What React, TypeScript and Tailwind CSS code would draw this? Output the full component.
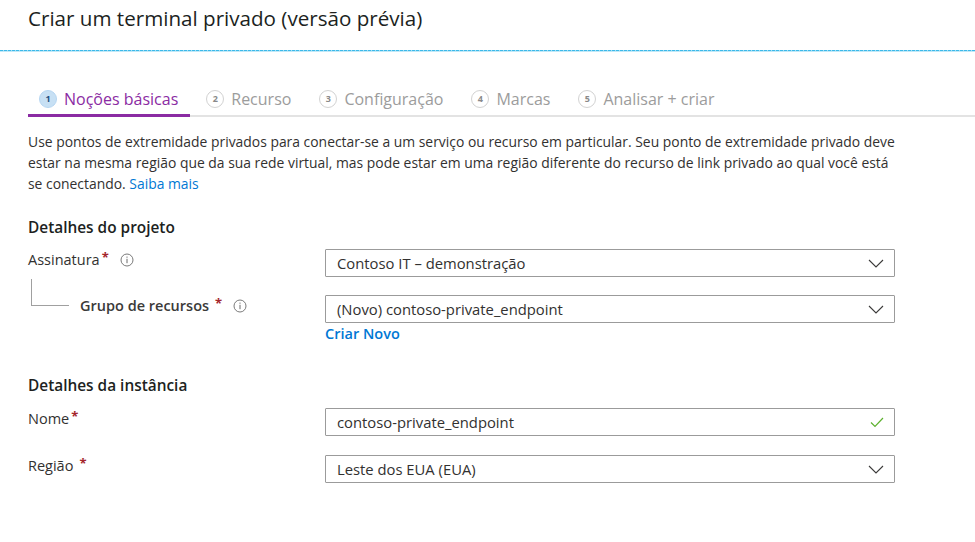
import React from "react";

const Chevron = () => (
  <svg width="16" height="9" viewBox="0 0 16 9" className="shrink-0">
    <path d="M1 1l7 7 7-7" stroke="#3b3a39" strokeWidth="1.1" fill="none" />
  </svg>
);

const Check = () => (
  <svg width="14" height="11" viewBox="0 0 14 11" className="shrink-0">
    <path d="M1 5.5l4 4 8-8.5" stroke="#5db12f" strokeWidth="1.2" fill="none" />
  </svg>
);

const Info = () => (
  <svg width="14" height="14" viewBox="0 0 14 14" className="shrink-0">
    <circle cx="7" cy="7" r="6" stroke="#6b6b6b" strokeWidth="0.9" fill="none" />
    <line x1="7" y1="5.8" x2="7" y2="10.2" stroke="#6b6b6b" strokeWidth="1" />
    <circle cx="7" cy="4.1" r="0.7" fill="#6b6b6b" />
  </svg>
);

const Star = ({ space = false }: { space?: boolean }) => (
  <span className={`text-[#a4262c] text-[13px] font-bold relative -top-[2px] ${space ? "ml-[6px]" : "ml-[2px]"}`}>*</span>
);

const Tab = ({ n, label, active = false }: { n: number; label: string; active?: boolean }) => (
  <div
    className={
      active
        ? "flex items-center h-[33px] pl-[11px] pr-[12px] border-b-[3px] border-[#8b2ba3] -mb-[2px]"
        : "flex items-center h-[30px] pl-[11px] pr-[12px]"
    }
  >
    <div
      className={
        active
          ? "w-[18px] h-[18px] rounded-full bg-[#c7e0f4] border border-[#b6d6f2] flex items-center justify-center text-[9px] font-bold text-[#1d4f80]"
          : "w-[18px] h-[18px] rounded-full bg-white border border-[#d2d2d2] flex items-center justify-center text-[9px] font-bold text-[#8a8a8a]"
      }
    >
      {n}
    </div>
    <span className={active ? "ml-[7px] text-[16px] text-[#8b2ba3]" : "ml-[7px] text-[16px] text-[#9c9c9c]"}>{label}</span>
  </div>
);

const Select = ({ value, check = false }: { value: string; check?: boolean }) => (
  <div className="h-[28px] w-[570px] border border-[#9b9b9b] rounded-[1px] bg-white flex items-center pl-[11px] pr-[10px] justify-between">
    <span className="text-[14.8px] text-[#323130]">{value}</span>
    {check ? <Check /> : <Chevron />}
  </div>
);

export default function App() {
  return (
    <div className="w-[975px] h-[542px] bg-white overflow-hidden font-['Open_Sans',sans-serif] text-[#323130]">
      <div className="h-[50px] pl-[28px] pt-[4px]">
        <h1 className="text-[20.6px] leading-[28px] text-[#201f1e]">Criar um terminal privado (versão prévia)</h1>
      </div>
      <div className="h-px bg-[repeating-linear-gradient(90deg,#3cb9e9_0px,#3cb9e9_3px,#a6ddf3_3px,#a6ddf3_4px)]" />
      <div className="h-px bg-[#c2e9f8]" />

      <div className="ml-[28px] mt-[32px] flex gap-[5px] border-b-2 border-[#e3e3e3] items-start">
        <Tab n={1} label="Noções básicas" active />
        <Tab n={2} label="Recurso" />
        <Tab n={3} label="Configuração" />
        <Tab n={4} label="Marcas" />
        <Tab n={5} label="Analisar + criar" />
      </div>

      <p className="ml-[28px] mt-[14px] text-[13.9px] leading-[21px] text-[#323130] whitespace-nowrap">
        Use pontos de extremidade privados para conectar-se a um serviço ou recurso em particular. Seu ponto de extremidade privado deve
        <br />
        estar na mesma região que da sua rede virtual, mas pode estar em uma região diferente do recurso de link privado ao qual você está
        <br />
        se conectando. <span className="text-[#0078d4]">Saiba mais</span>
      </p>

      <div className="ml-[28px]">
        <h2 className="mt-[24px] text-[15.4px] leading-[20px] font-semibold text-[#201f1e]">Detalhes do projeto</h2>

        <div className="mt-[11px] grid grid-cols-[297px_570px] items-start">
          <div className="flex items-center h-[22px] text-[14.5px]">
            <span>Assinatura</span>
            <Star />
            <span className="ml-[11px]"><Info /></span>
          </div>
          <Select value="Contoso IT – demonstração" />
        </div>

        <div className="mt-[18px] grid grid-cols-[297px_570px] items-start">
          <div className="flex items-start">
            <div className="ml-[3px] -mt-[16px] w-[38px] h-[27px] border-l border-b border-[#a0a0a0]" />
            <div className="ml-[11px] flex items-center h-[22px] text-[14.5px] font-semibold text-[#3b3a39]">
              <span>Grupo de recursos</span>
              <Star space />
              <span className="ml-[11px]"><Info /></span>
            </div>
          </div>
          <div>
            <Select value="(Novo) contoso-private_endpoint" />
            <div className="text-[14.5px] leading-[22px] font-semibold text-[#0078d4]">Criar Novo</div>
          </div>
        </div>

        <h2 className="mt-[31px] text-[15.4px] leading-[20px] font-semibold text-[#201f1e]">Detalhes da instância</h2>

        <div className="mt-[12px] grid grid-cols-[297px_570px] items-start">
          <div className="flex items-center h-[22px] text-[14.5px]">
            <span>Nome</span>
            <Star />
          </div>
          <Select value="contoso-private_endpoint" check />
        </div>

        <div className="mt-[19px] grid grid-cols-[297px_570px] items-start">
          <div className="flex items-center h-[22px] text-[14.5px]">
            <span>Região</span>
            <Star space />
          </div>
          <Select value="Leste dos EUA (EUA)" />
        </div>
      </div>
    </div>
  );
}
